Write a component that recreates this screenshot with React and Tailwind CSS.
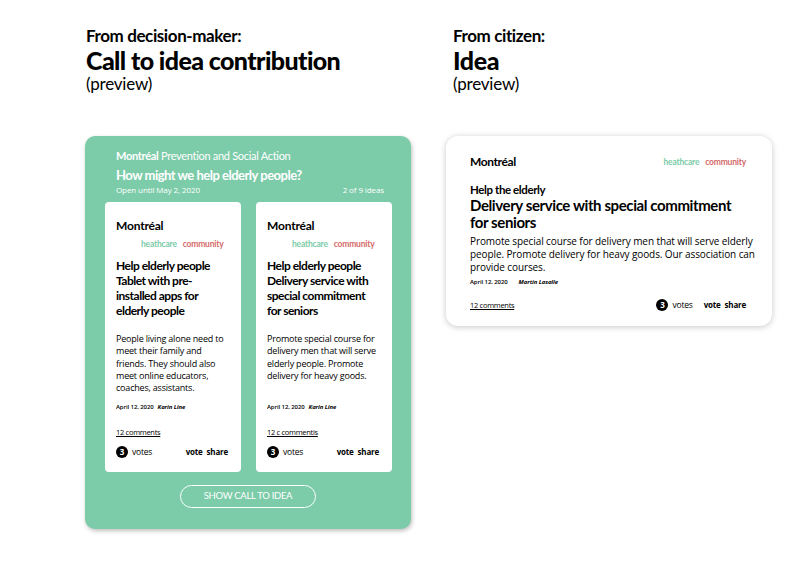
import React from "react";

const lato = { fontFamily: "Lato, 'Open Sans', sans-serif" };

function Tags({ className = "" }) {
  return (
    <div className={"flex gap-[6px] font-bold text-[8.5px] tracking-[-0.2px] " + className} style={lato}>
      <span className="text-[#7ccba9]">heathcare</span>
      <span className="text-[#d46a6a]">community</span>
    </div>
  );
}

function Votes() {
  return (
    <div className="flex items-center gap-[4px]">
      <span className="w-[12px] h-[12px] rounded-full bg-black text-white text-[8px] font-bold flex items-center justify-center leading-none">
        3
      </span>
      <span className="text-[8.5px] tracking-[-0.2px]">votes</span>
    </div>
  );
}

function IdeaCard({ title, body, comments }) {
  return (
    <div className="w-[136px] h-[270px] bg-white rounded-[4px] px-[11px] pt-[17px] flex flex-col font-['Open_Sans',sans-serif] text-black">
      <div className="font-bold text-[12px] leading-[14px] tracking-[-0.2px]" style={lato}>Montréal</div>
      <Tags className="pl-[25px] mt-[5px] leading-[12px]" />
      <div className="font-bold text-[12px] leading-[15px] mt-[8px] tracking-[-0.5px] whitespace-nowrap" style={lato}>
        {title.map((l) => (
          <div key={l}>{l}</div>
        ))}
      </div>
      <div className="h-[69px] mt-[15px] text-[9px] leading-[12.3px] tracking-[-0.2px]">{body}</div>
      <div className="flex gap-[4px] text-[6px] font-semibold leading-[10px] tracking-[-0.1px]">
        <span>April 12, 2020</span>
        <span className="italic font-bold">Karin Line</span>
      </div>
      <div className="mt-[15px] text-[7.5px] underline leading-[10px] tracking-[-0.3px]">{comments}</div>
      <div className="mt-[9px] flex items-center justify-between pr-[2px]">
        <Votes />
        <div className="flex gap-[4px] text-[8px] font-bold tracking-[-0.2px]">
          <span>vote</span>
          <span>share</span>
        </div>
      </div>
    </div>
  );
}

export default function App() {
  return (
    <div className="w-[806px] h-[570px] bg-white relative text-black" style={lato}>
      <div className="flex pt-[26px]">
        {/* left column */}
        <div className="w-[367px] pl-[85px] flex flex-col">
          <div className="pl-[1px]">
            <div className="font-bold text-[17px] leading-[20px] tracking-[-0.4px]">From decision-maker:</div>
            <div className="font-black text-[25px] leading-[28px] tracking-[-0.6px]">Call to idea contribution</div>
            <div className="text-[17px] leading-[20px] tracking-[-0.2px]">(preview)</div>
          </div>
          <div className="mt-[42px] w-[326px] h-[393px] bg-[#7ccba9] rounded-[10px] shadow-[1px_2px_4px_rgba(0,0,0,0.25)] flex flex-col">
            <div className="pl-[31px] pr-[27px] pt-[12px] text-white">
              <div className="text-[11px] leading-[15px] tracking-[-0.3px]">
                <span className="font-bold">Montréal</span> Prevention and Social Action
              </div>
              <div className="font-bold text-[13px] leading-[18px] mt-[3px] tracking-[-0.5px]">How might we help elderly people?</div>
              <div className="flex justify-between text-[8px] leading-[12px] tracking-[-0.1px] font-['Open_Sans',sans-serif]">
                <span>Open until May 2, 2020</span>
                <span>2 of 9 ideas</span>
              </div>
            </div>
            <div className="flex gap-[15px] pl-[20px] mt-[6px]">
              <IdeaCard
                title={["Help elderly people", "Tablet with pre-", "installed apps for", "elderly people"]}
                body="People living alone need to meet their family and friends. They should also meet online educators, coaches, assistants."
                comments="12 comments"
              />
              <IdeaCard
                title={["Help elderly people", "Delivery service with", "special commitment", "for seniors"]}
                body="Promote special course for delivery men that will serve elderly people. Promote delivery for heavy goods."
                comments="12 c commentis"
              />
            </div>
            <div className="flex justify-center mt-[13px]">
              <div className="w-[136px] h-[23px] rounded-full border border-white text-white text-[9.5px] flex items-center justify-center tracking-[-0.3px]">
                SHOW CALL TO IDEA
              </div>
            </div>
          </div>
        </div>

        {/* right column */}
        <div className="flex flex-col pl-[79px]">
          <div className="pl-[7px]">
            <div className="font-bold text-[17px] leading-[20px] tracking-[-0.4px]">From citizen:</div>
            <div className="font-black text-[25px] leading-[28px] tracking-[-0.4px]">Idea</div>
            <div className="text-[17px] leading-[20px] tracking-[-0.2px]">(preview)</div>
          </div>
          <div className="mt-[42px] w-[326px] h-[190px] bg-white rounded-[12px] shadow-[0_1px_6px_rgba(0,0,0,0.22)] pl-[24px] pr-[26px] pt-[19px] flex flex-col">
            <div className="flex justify-between items-center">
              <div className="font-bold text-[12px] leading-[14px] tracking-[-0.4px]">Montréal</div>
              <Tags />
            </div>
            <div className="font-bold text-[11.5px] leading-[14px] mt-[14px] tracking-[-0.4px]">Help the elderly</div>
            <div className="font-bold text-[15px] leading-[17px] tracking-[-0.4px] whitespace-nowrap">
              Delivery service with special commitment<br />for seniors
            </div>
            <div className="font-['Open_Sans',sans-serif] text-[10px] leading-[13px] mt-[4px] mr-[-16px] tracking-[-0.1px]">
              Promote special course for delivery men that will serve elderly people. Promote delivery for heavy goods. Our association can provide courses.
            </div>
            <div className="flex gap-[11px] text-[6px] font-semibold leading-[10px] mt-[3px] tracking-[-0.1px] font-['Open_Sans',sans-serif]">
              <span>April 12, 2020</span>
              <span className="italic font-bold">Martin Lasalle</span>
            </div>
            <div className="flex justify-between items-center mt-[12px] font-['Open_Sans',sans-serif]">
              <span className="text-[7.5px] underline tracking-[-0.3px]">12 comments</span>
              <div className="flex items-center gap-[11px]">
                <Votes />
                <div className="flex gap-[4px] text-[8px] font-bold tracking-[-0.2px]">
                  <span>vote</span>
                  <span>share</span>
                </div>
              </div>
            </div>
          </div>
        </div>
      </div>
    </div>
  );
}
